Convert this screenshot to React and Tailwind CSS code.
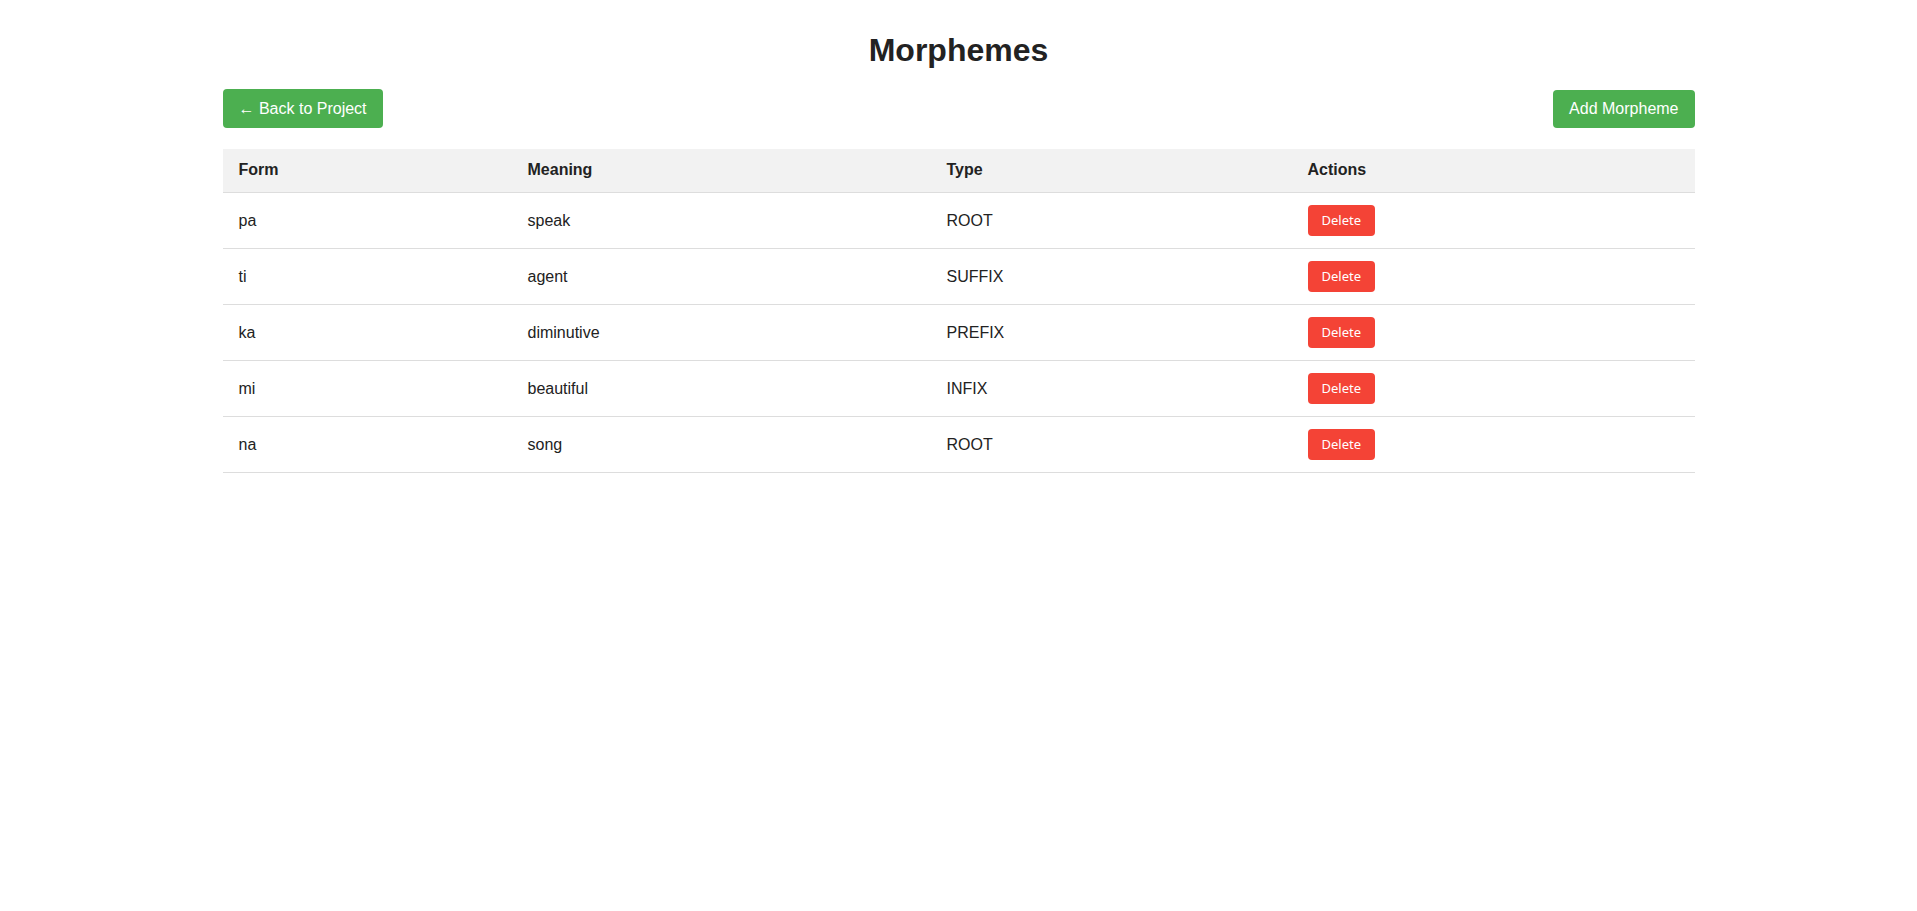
import React from 'react';

const morphemes = [
  { id: 1, form: 'pa', meaning: 'speak', type: 'ROOT' },
  { id: 2, form: 'ti', meaning: 'agent', type: 'SUFFIX' },
  { id: 3, form: 'ka', meaning: 'diminutive', type: 'PREFIX' },
  { id: 4, form: 'mi', meaning: 'beautiful', type: 'INFIX' },
  { id: 5, form: 'na', meaning: 'song', type: 'ROOT' },
];

export default function App() {
  return (
    <div className="min-h-screen bg-white text-[#222] font-['Liberation_Sans',Arial,sans-serif]">
      <main className="w-[1472px] mx-auto pt-[32px]">
        <h1 className="text-center text-[32px] leading-[37px] font-bold">Morphemes</h1>

        {/* Toolbar */}
        <div className="flex justify-between items-center mt-[20px]">
          <button className="h-[39px] px-4 bg-[#4caf50] text-white text-[16px] rounded-[4px]">
            ← Back to Project
          </button>
          <button className="h-[38px] px-4 bg-[#4caf50] text-white text-[16px] rounded-[4px]">
            Add Morpheme
          </button>
        </div>

        {/* Morpheme table */}
        <table className="w-full mt-[21px] border-collapse text-[16px]">
          <thead>
            <tr className="bg-[#f2f2f2] border-b border-[#ddd] text-left">
              <th className="w-[289px] px-4 pt-3 pb-[13px] font-bold leading-[18px]">Form</th>
              <th className="w-[419px] px-4 pt-3 pb-[13px] font-bold leading-[18px]">Meaning</th>
              <th className="w-[361px] px-4 pt-3 pb-[13px] font-bold leading-[18px]">Type</th>
              <th className="px-4 pt-3 pb-[13px] font-bold leading-[18px]">Actions</th>
            </tr>
          </thead>
          <tbody>
            {morphemes.map((m) => (
              <tr key={m.id} className="border-b border-[#ddd]">
                <td className="px-4 py-3 align-middle leading-[18px]">{m.form}</td>
                <td className="px-4 py-3 align-middle leading-[18px]">{m.meaning}</td>
                <td className="px-4 py-3 align-middle leading-[18px]">{m.type}</td>
                <td className="px-4 py-3 align-top">
                  <button className="h-[31px] px-[14px] bg-[#f44336] text-white text-[13px] rounded-[4px] font-['Noto_Sans',sans-serif] block">
                    Delete
                  </button>
                </td>
              </tr>
            ))}
          </tbody>
        </table>
      </main>
    </div>
  );
}
